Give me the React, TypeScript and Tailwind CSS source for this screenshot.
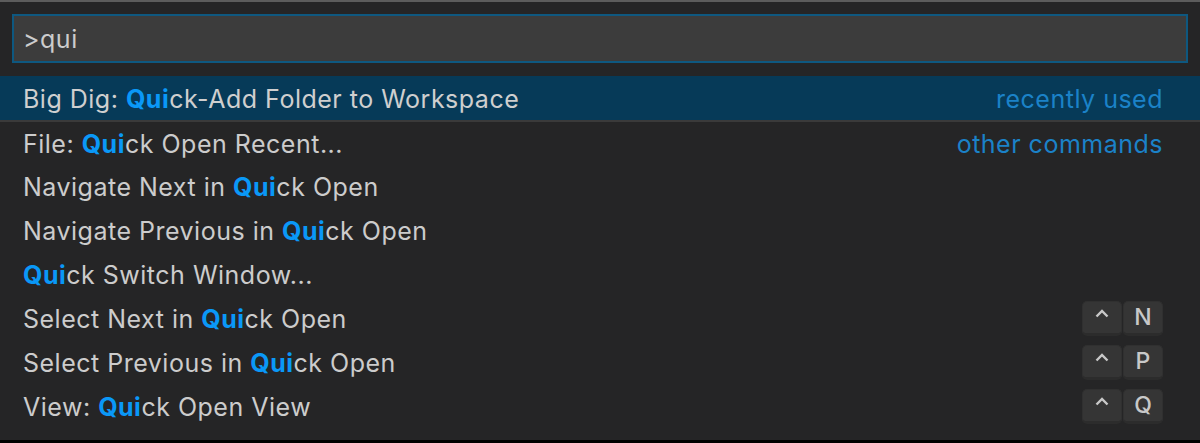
import type { ReactNode } from "react";

type Item = {
  pre: string;
  hit: string;
  post: string;
  group?: string;
  keys?: string[];
};

const items: Item[] = [
  { pre: "Big Dig: ", hit: "Qui", post: "ck-Add Folder to Workspace", group: "recently used" },
  { pre: "File: ", hit: "Qui", post: "ck Open Recent...", group: "other commands" },
  { pre: "Navigate Next in ", hit: "Qui", post: "ck Open" },
  { pre: "Navigate Previous in ", hit: "Qui", post: "ck Open" },
  { pre: "", hit: "Qui", post: "ck Switch Window..." },
  { pre: "Select Next in ", hit: "Qui", post: "ck Open", keys: ["^", "N"] },
  { pre: "Select Previous in ", hit: "Qui", post: "ck Open", keys: ["^", "P"] },
  { pre: "View: ", hit: "Qui", post: "ck Open View", keys: ["^", "Q"] },
];

const Key = ({ children }: { children: ReactNode }) => (
  <span className="inline-flex h-[35px] w-[40px] items-center justify-center rounded-[5px] border border-[#303030] border-b-[3px] border-b-[#2c2c2c] bg-[#353535] text-[23px] font-medium text-[#c8c8c8]">
    {children === "^" ? (
      <svg width="14" height="9" viewBox="0 0 14 9" className="mb-[7px]">
        <path d="M1.5 7.5 L7 2 L12.5 7.5" fill="none" stroke="#c8c8c8" strokeWidth="2.4" />
      </svg>
    ) : (
      children
    )}
  </span>
);

export default function App() {
  return (
    <div
      className="flex h-[443px] w-[1200px] flex-col overflow-hidden bg-black"
      style={{ fontFamily: "Inter, 'Noto Sans', sans-serif" }}
    >
      <div className="flex h-[440px] flex-col border-t-2 border-[#5c5c5c] bg-[#252526] tracking-[0.5px]">
        <div className="px-3 pt-3 pb-[13px]">
          <div className="flex h-[49px] items-center border-2 border-[#0e5880] bg-[#3c3c3c] px-[9px] pt-[2px] text-[25px] text-[#cccccc]">
            &gt;qui
          </div>
        </div>

        {items.map((item, i) => (
          <div
            key={i}
            className={[
              "flex h-[44px] items-center justify-between pl-[23px] pr-[37px] text-[25px]",
              i === 0 ? "bg-[#063a58] text-[#cfcfcf]" : "text-[#cccccc]",
              i === 1 ? "border-t-2 border-[#3a3a3a]" : "",
            ].join(" ")}
          >
            <span className="whitespace-pre pt-[3px]">
              {item.pre}
              <span className="font-bold text-[#0a98f7]">{item.hit}</span>
              {item.post}
            </span>
            {item.group && (
              <span className="pt-[3px] text-[#1b82c8]">{item.group}</span>
            )}
            {item.keys && (
              <span className="flex gap-px tracking-normal">
                {item.keys.map((k) => (
                  <Key key={k}>{k}</Key>
                ))}
              </span>
            )}
          </div>
        ))}
      </div>
    </div>
  );
}
